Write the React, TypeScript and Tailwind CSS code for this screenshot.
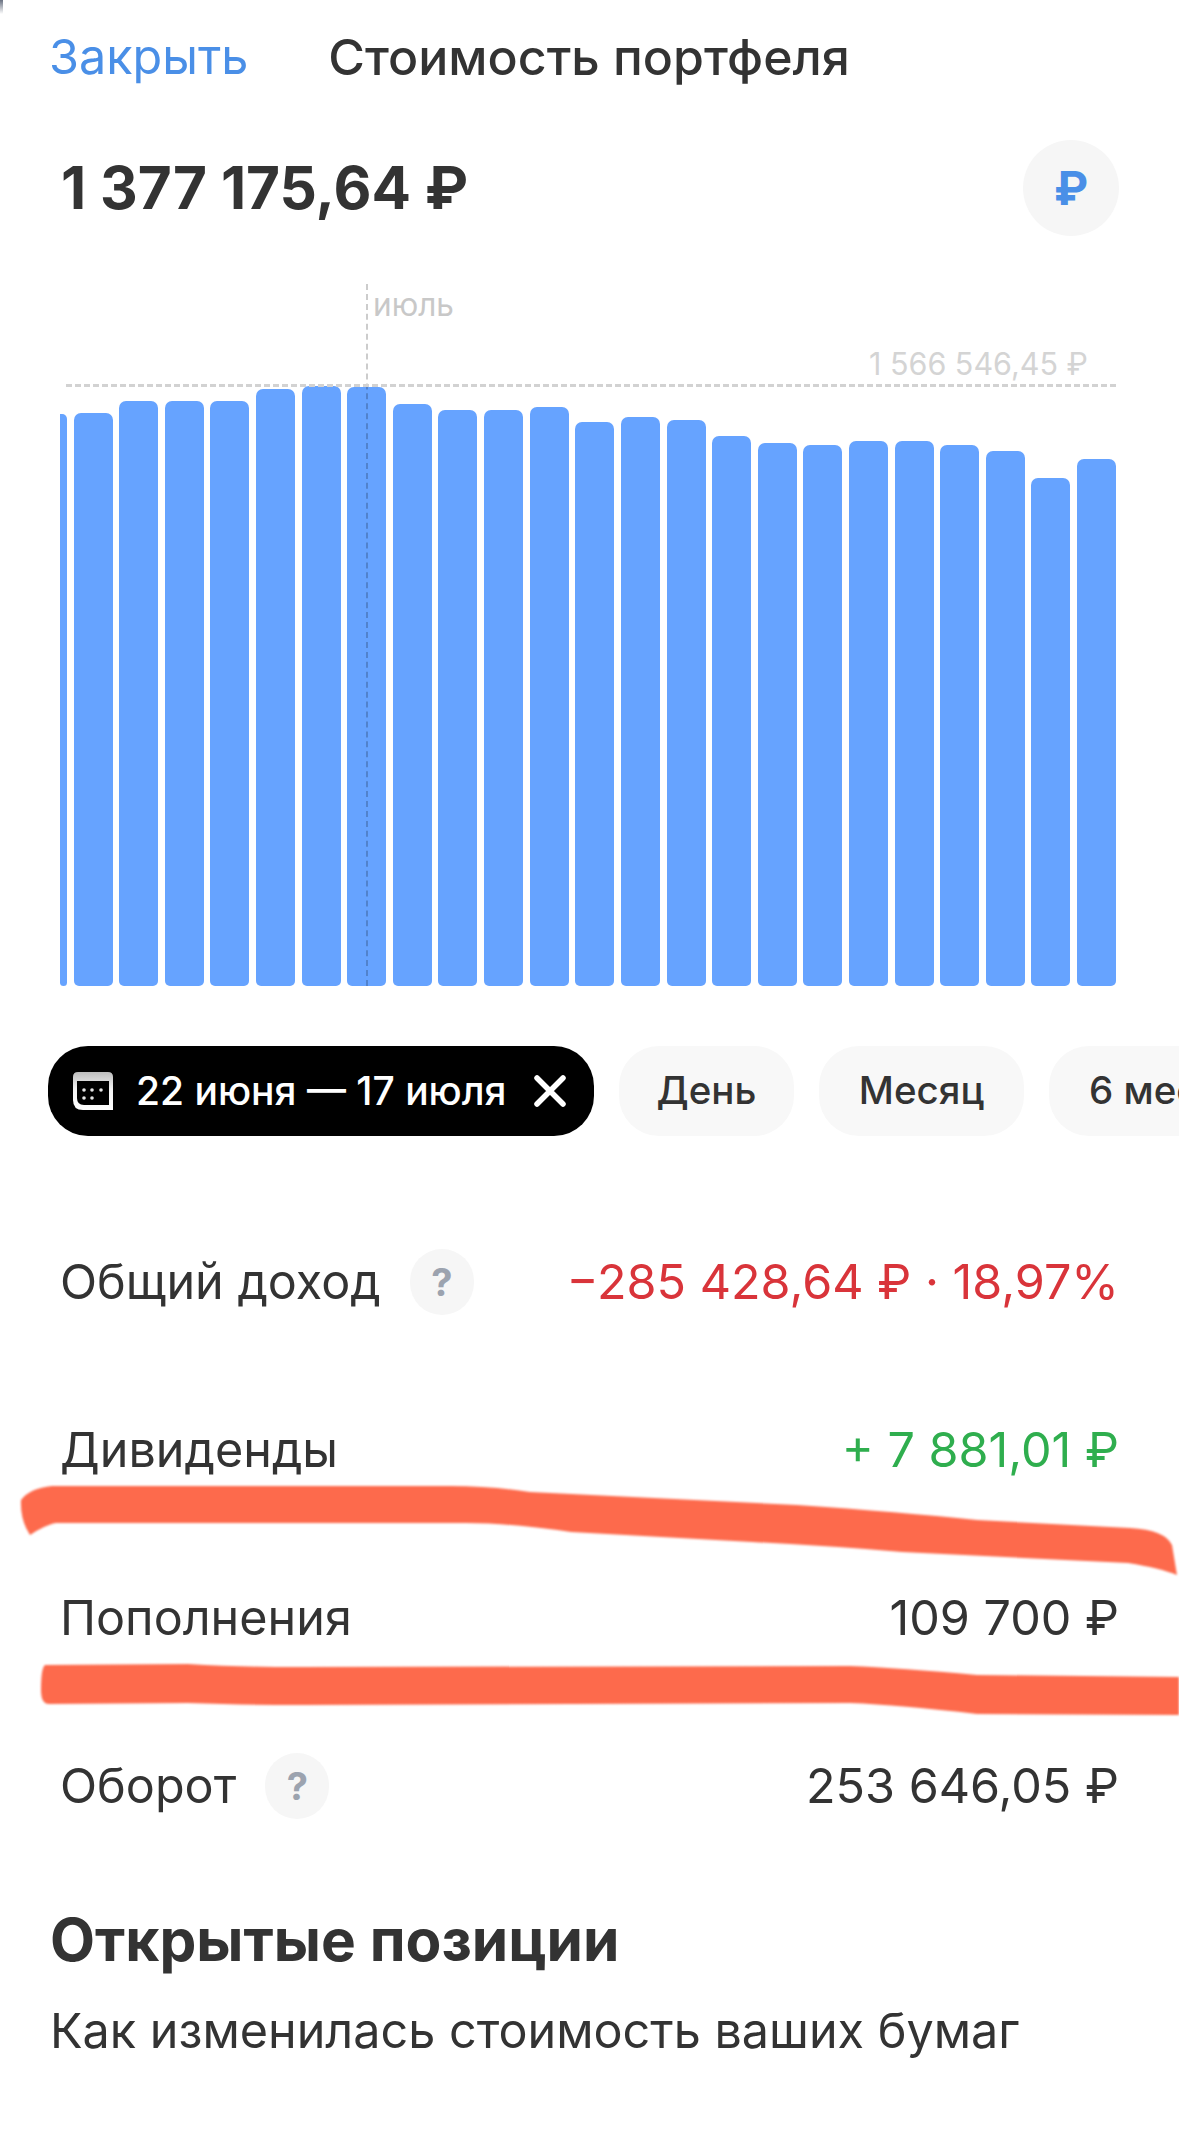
import React from 'react';

const barTops = [414, 413, 401, 401, 401, 389, 386, 387, 404, 410, 410, 407, 422, 417, 420, 436, 443, 445, 441, 441, 445, 451, 478, 459];
const chartBottom = 986;

const CalendarIcon: React.FC = () => (
  <svg width="40" height="38" viewBox="0 0 40 38" fill="none">
    <defs>
      <linearGradient id="calendarTop" x1="0" y1="0" x2="0" y2="1">
        <stop offset="0" stopColor="#bdbdbd" />
        <stop offset="0.45" stopColor="#f2f2f2" />
        <stop offset="1" stopColor="#ffffff" />
      </linearGradient>
    </defs>
    <path d="M5 0 H35 Q40 0 40 5 V38 H10 Q0 38 0 28 V5 Q0 0 5 0 Z" fill="url(#calendarTop)" />
    <path d="M4 9 H36 V33 H11 Q4 33 4 26 Z" fill="#000" />
    <circle cx="11" cy="18" r="1.8" fill="#e5e5e5" />
    <circle cx="19" cy="18" r="1.8" fill="#e5e5e5" />
    <circle cx="28" cy="18" r="1.8" fill="#e5e5e5" />
    <circle cx="11" cy="26" r="1.8" fill="#e5e5e5" />
    <circle cx="19" cy="26" r="1.8" fill="#e5e5e5" />
  </svg>
);

const CloseIcon: React.FC = () => (
  <svg width="32" height="32" viewBox="0 0 32 32" fill="none">
    <path d="M3 3 L29 29 M29 3 L3 29" stroke="#fff" strokeWidth="5.5" strokeLinecap="round" />
  </svg>
);

const HelpBadge: React.FC = () => (
  <span className="flex h-[66px] w-[64px] items-center justify-center rounded-full bg-[#f6f6f6] text-[38px] font-bold text-[#9ca3af]">?</span>
);

const Chip: React.FC<{ label: string; className: string }> = ({ label, className }) => (
  <div className={`flex h-[90px] flex-none items-center justify-center rounded-[40px] bg-[#f8f8f8] text-[38.5px] font-medium text-[#333] ${className}`}>
    {label}
  </div>
);

const Row: React.FC<{ label: string; help?: boolean; value: string; valueClass?: string }> = ({ label, help, value, valueClass }) => (
  <div className="flex h-[168px] items-center justify-between">
    <div className="flex items-center gap-[29px]">
      <span>{label}</span>
      {help && <HelpBadge />}
    </div>
    <span className={valueClass}>{value}</span>
  </div>
);

export default function App() {
  return (
    <div className="relative h-[2135px] w-[1179px] overflow-hidden bg-white font-[family-name:Inter,sans-serif] text-[#333]">
      <div className="absolute left-0 top-0 h-[14px] w-[3px] bg-gradient-to-b from-gray-500 to-transparent" />

      <header className="flex h-[114px] items-center gap-[80px] pl-[49px]">
        <span className="text-[48.5px] text-[#4a8fe7]">Закрыть</span>
        <span className="text-[50px] font-medium">Стоимость портфеля</span>
      </header>

      <div className="mt-[26px] flex h-[96px] items-center justify-between px-[60px]">
        <span className="ml-[1px] text-[58.5px] font-bold">1 377 175,64 ₽</span>
        <div className="flex h-[96px] w-[96px] items-center justify-center rounded-full bg-[#f6f6f6] text-[46px] font-bold text-[#4a8fe7]">₽</div>
      </div>

      <div className="relative ml-[60px] mt-[48px] h-[702px] w-[1056px]">
        <div className="flex h-full items-end gap-[6.62px] overflow-hidden">
          {barTops.map((top, i) => (
            <div
              key={i}
              className={`flex-none rounded-b-[5px] rounded-t-[7px] bg-[#66a3ff] ${i === 0 ? 'w-[7px] rounded-l-none' : 'w-[39px]'}`}
              style={{ height: chartBottom - top }}
            />
          ))}
        </div>
        <div className="absolute bottom-0 left-[306px] top-0 w-0 border-l-2 border-dashed border-black/20" />
        <div className="absolute left-[6px] right-0 top-[100px] h-0 border-t-[3px] border-dashed border-[#d2d2d2]" />
        <span className="absolute left-[313px] top-[4px] text-[31.5px] leading-[34px] text-[#c8c8c8]">июль</span>
        <span className="absolute right-[28px] top-[63px] text-[30.5px] leading-[34px] text-[#d4d4d4]">1 566 546,45 ₽</span>
      </div>

      <div className="mt-[60px] flex gap-[25px] overflow-hidden pl-[48px]">
        <div className="flex h-[90px] w-[546px] flex-none items-center rounded-[40px] bg-black pl-[25px] text-[39px] font-medium text-white">
          <CalendarIcon />
          <span className="ml-[23px]">22 июня — 17 июля</span>
          <span className="ml-[27px]"><CloseIcon /></span>
        </div>
        <Chip label="День" className="w-[175px]" />
        <Chip label="Месяц" className="w-[205px]" />
        <Chip label="6 месяцев" className="w-[260px] justify-start pl-[40px]" />
      </div>

      <div className="mt-[62px] px-[60px] text-[48.5px]">
        <Row label="Общий доход" help value="−285 428,64 ₽ · 18,97%" valueClass="text-[#d9343a]" />
        <Row label="Дивиденды" value="+ 7 881,01 ₽" valueClass="text-[#2fae4e]" />
        <Row label="Пополнения" value="109 700 ₽" />
        <Row label="Оборот" help value="253 646,05 ₽" />
      </div>

      <h2 className="ml-[50px] mt-[40px] text-[58.5px] font-bold leading-[60px]">Открытые позиции</h2>
      <p className="ml-[50px] mt-[31px] text-[48.5px] leading-[60px]">Как изменилась стоимость ваших бумаг</p>

      {/* marker strokes drawn over the screenshot */}
      <svg className="pointer-events-none absolute left-0 top-0 blur-[1px]" width="1179" height="2135" viewBox="0 0 1179 2135" fill="#fd6a4c">
        <path d="M21 1500 Q30 1488 52 1486 L451 1486 Q490 1486 530 1492 L797 1505 Q900 1512 977 1520 L1130 1528 Q1165 1530 1172 1545 L1177 1575 Q1160 1568 1128 1563 L902 1552 Q830 1546 752 1542 L571 1532 Q510 1523 466 1523 L56 1523 Q45 1525 30 1535 Q20 1520 21 1500 Z" />
        <path d="M45 1665 L188 1664 Q240 1667 301 1667 L850 1666 Q900 1668 977 1675 L1179 1677 L1179 1715 L977 1714 Q900 1705 850 1703 L301 1705 Q240 1705 188 1703 L49 1704 Q41 1704 41 1690 Q41 1668 45 1665 Z" />
      </svg>
    </div>
  );
}
